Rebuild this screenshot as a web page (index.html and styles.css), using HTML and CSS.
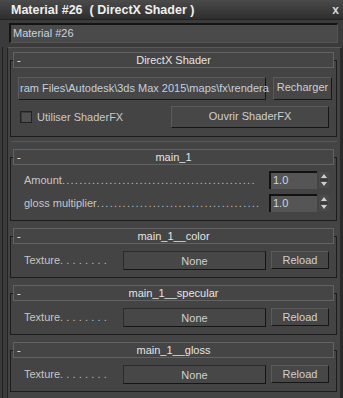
FILE: index.html
```html
<!DOCTYPE html>
<html>
<head>
<title>Material #26</title>
<meta name="viewport" content="width=device-width, initial-scale=1">
<link rel="stylesheet" href="styles.css">
</head>
<body>

<div class="window">
  <div class="titlebar">
    <span class="title">Material #26&nbsp; ( DirectX Shader )</span>
    <span class="close">x</span>
  </div>

  <div class="namerow">
    <div class="namefield">Material #26</div>
  </div>

  <div class="panel">
    <div class="rollouts">

      <!-- shader file -->
      <div class="rollout first">
        <div class="rhead"><span class="minus">-</span><span class="rtitle">DirectX Shader</span><span></span></div>
        <div class="rbody body-shader">
          <div class="pathrow">
            <div class="btn pathfield">ram Files\Autodesk\3ds Max 2015\maps\fx\rendera</div>
            <div class="btn recharger">Recharger</div>
          </div>
          <div class="checkrow">
            <span class="checkbox"></span>
            <span class="checklabel">Utiliser ShaderFX</span>
            <div class="btn ouvrir">Ouvrir ShaderFX</div>
          </div>
        </div>
      </div>

      <div class="sep"></div>

      <!-- params -->
      <div class="rollout">
        <div class="rhead"><span class="minus">-</span><span class="rtitle">main_1</span><span></span></div>
        <div class="rbody body-params">
          <div class="paramrow">
            <span class="label">Amount</span><span class="dots">.............................................</span>
            <div class="spinner"><span class="spinfield">1.0</span>
              <svg class="arrows" width="10" height="16" viewBox="0 0 10 16">
                <rect x="0" y="0" width="10" height="16" fill="#4a4a4a"/>
                <path d="M5 2 L8 6 L2 6 Z" fill="#cfcfcf"/>
                <line x1="1" y1="8" x2="9" y2="8" stroke="#2a2a2a"/>
                <path d="M2 10 L8 10 L5 14 Z" fill="#cfcfcf"/>
              </svg>
            </div>
          </div>
          <div class="paramrow">
            <span class="label">gloss multiplier</span><span class="dots">......................................</span>
            <div class="spinner"><span class="spinfield">1.0</span>
              <svg class="arrows" width="10" height="16" viewBox="0 0 10 16">
                <rect x="0" y="0" width="10" height="16" fill="#4a4a4a"/>
                <path d="M5 2 L8 6 L2 6 Z" fill="#cfcfcf"/>
                <line x1="1" y1="8" x2="9" y2="8" stroke="#2a2a2a"/>
                <path d="M2 10 L8 10 L5 14 Z" fill="#cfcfcf"/>
              </svg>
            </div>
          </div>
        </div>
      </div>

      <div class="rollout">
        <div class="rhead"><span class="minus">-</span><span class="rtitle">main_1__color</span><span></span></div>
        <div class="rbody body-tex">
          <div class="texrow">
            <span class="label">Texture</span><span class="dots wide">........</span>
            <div class="btn none">None</div>
            <div class="btn reload">Reload</div>
          </div>
        </div>
      </div>

      <div class="rollout">
        <div class="rhead"><span class="minus">-</span><span class="rtitle">main_1__specular</span><span></span></div>
        <div class="rbody body-tex">
          <div class="texrow">
            <span class="label">Texture</span><span class="dots wide">........</span>
            <div class="btn none">None</div>
            <div class="btn reload">Reload</div>
          </div>
        </div>
      </div>

      <div class="rollout">
        <div class="rhead"><span class="minus">-</span><span class="rtitle">main_1__gloss</span><span></span></div>
        <div class="rbody body-tex">
          <div class="texrow">
            <span class="label">Texture</span><span class="dots wide">........</span>
            <div class="btn none">None</div>
            <div class="btn reload">Reload</div>
          </div>
        </div>
      </div>

    </div>
  </div>
</div>

</body>
</html>
```

FILE: styles.css
```css
* {box-sizing: border-box;}

body {
  margin: 0;
  background: #3c3c3c;
  font-family: "Liberation Sans", Arial, sans-serif;
  font-size: 11px;
  color: #cfcfcf;
}

.window {
  width: 343px;
  height: 398px;
  overflow: hidden;
  background: #3b3b3b;
}

/* title bar */
.titlebar {
  height: 20px;
  display: flex;
  justify-content: space-between;
  align-items: center;
  padding: 0 4px 0 11px;
  background: linear-gradient(#4a4a4a, #2e2e2e);
  border-bottom: 1px solid #222;
}

.title {
  font-size: 12.5px;
  font-weight: bold;
  color: #efefef;
  white-space: pre;
}

.close {
  font-size: 12px;
  font-weight: bold;
  color: #d8d8d8;
}

/* material name */
.namerow {
  padding: 3px 5px 0 9px;
}

.namefield {
  height: 20px;
  padding: 1px 0 0 2px;
  background: #4a4a4a;
  border-top: 2px solid #141414;
  border-left: 2px solid #141414;
  border-right: 1px solid #555;
  border-bottom: 1px solid #555;
  color: #c9d3e2;
  font-size: 11px;
  line-height: 15px;
}

/* rollout area */
.panel {
  margin: 4px 0 0 2px;
  border-left: 1px solid #1f1f1f;
  padding-left: 4px;
  height: 360px;
}

.rollouts {
  height: 100%;
  background: #444;
  border-top: 1px solid #5a5a5a;
  border-left: 1px solid #232323;
  border-right: 3px solid #2a2a2a;
  padding: 4px 3px 0 2px;
}

.rollout {
  width: 327px;
  margin-bottom: 7px;
}

.rhead {
  position: relative;
  z-index: 1;
  height: 16px;
  margin: 0 3px -8px 3px;
  display: grid;
  grid-template-columns: 14px 1fr 14px;
  align-items: center;
  background: #454545;
  border: 1px solid #626262;
  color: #e4e4e4;
  font-size: 11px;
  line-height: 14px;
}

.minus {
  padding-left: 3px;
  color: #e8e8e8;
}

.rtitle {
  text-align: center;
}

.rbody {
  border: 1px solid #1c1c1c;
}

.body-shader {
  padding: 16px 4px 8px 7px;
}

.body-params {
  padding: 13px 7px 8px 13px;
}

.body-tex {
  padding: 14px 7px 8px 13px;
}

.sep {
  height: 1px;
  background: #585858;
  margin: -3px 0 7px 1px;
}

/* buttons */
.btn {
  background: #474747;
  border: 1px solid;
  border-color: #5b5b5b #161616 #161616 #5b5b5b;
  color: #d0d0d0;
  text-align: center;
  font-size: 11px;
}

.pathrow {
  display: flex;
  gap: 7px;
  height: 23px;
}

.pathfield {
  width: 248px;
  white-space: nowrap;
  text-align: left;
  padding-left: 1px;
  color: #c3cfdf;
  font-size: 11px;
  line-height: 21px;
}

.recharger {
  width: 59px;
  line-height: 19px;
}

.checkrow {
  margin-top: 6px;
  height: 22px;
  display: flex;
  align-items: center;
}

.checkbox {
  width: 12px;
  height: 12px;
  margin-left: 2px;
  background: #505050;
  border: 1px solid #222;
  box-shadow: inset 1px 1px 0 #3a3a3a;
}

.checklabel {
  margin-left: 5px;
  font-size: 11px;
  color: #c8c8c8;
}

.ouvrir {
  margin-left: auto;
  margin-right: 3px;
  width: 158px;
  height: 22px;
  line-height: 19px;
}

/* parameter rows */
.paramrow {
  display: flex;
  align-items: center;
  height: 18px;
  margin-bottom: 5px;
}

.paramrow:last-child {
  margin-bottom: 0;
}

.label {
  font-size: 11px;
  color: #c6c6c6;
}

.dots {
  font-size: 11px;
  color: #bdbdbd;
  letter-spacing: 1.25px;
  white-space: nowrap;
}

.dots.wide {
  letter-spacing: 3.2px;
}

.spinner {
  margin-left: auto;
  display: flex;
  align-items: center;
  gap: 2px;
}

.spinfield {
  width: 48px;
  height: 18px;
  padding-left: 2px;
  background: #555;
  border-top: 2px solid #121212;
  border-left: 2px solid #121212;
  color: #cad6e6;
  font-size: 11px;
  line-height: 15px;
}

.arrows {
  display: block;
}

/* texture rows */
.texrow {
  display: flex;
  align-items: center;
  height: 18px;
}

.none {
  margin-left: auto;
  width: 143px;
  height: 19px;
  line-height: 18px;
  border-color: #2c2c2c #151515 #151515 #2c2c2c;
}

.reload {
  width: 58px;
  height: 18px;
  margin-left: 5px;
  line-height: 16px;
}
```
